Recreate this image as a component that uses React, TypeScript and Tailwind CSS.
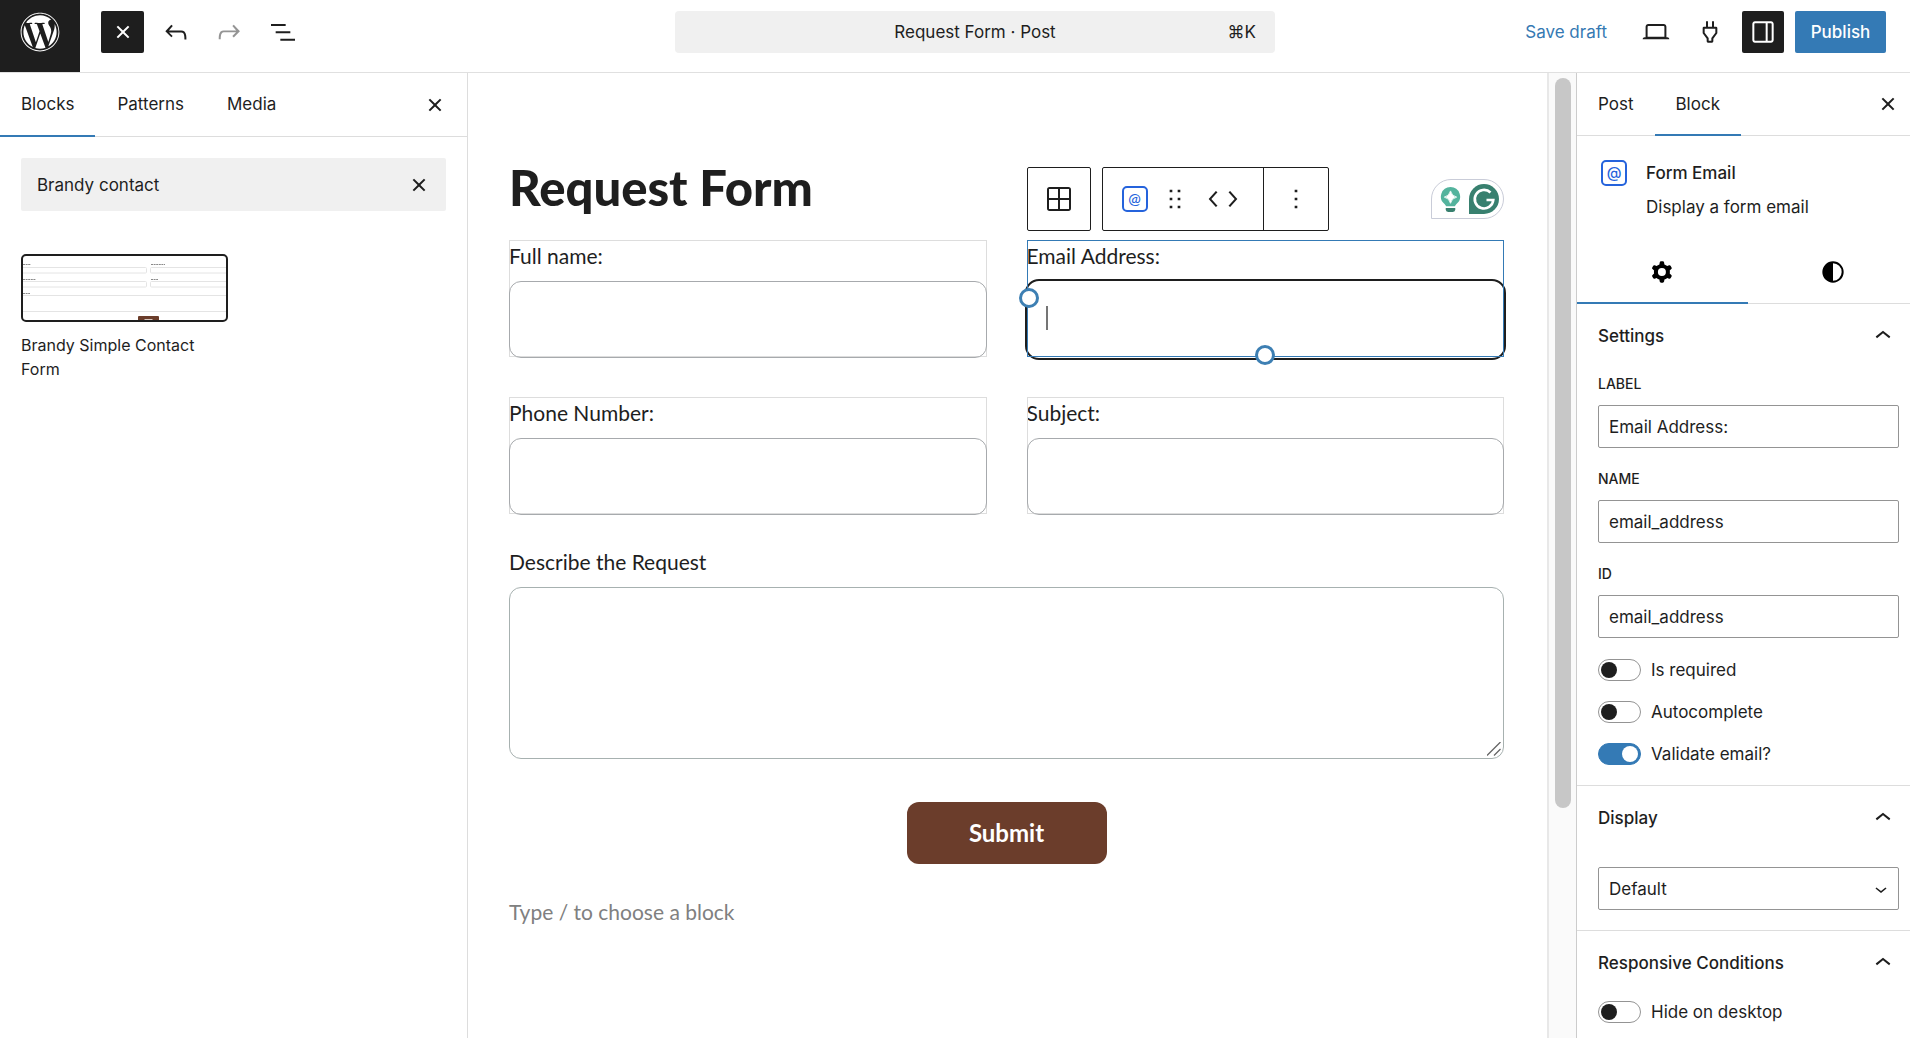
import { useId, useState } from "react";
import type { ReactNode } from "react";
import { FaWordpress } from "react-icons/fa";

const ICONS = {
  close:
    "M12 13.06l3.712 3.713 1.061-1.06L13.061 12l3.712-3.712-1.06-1.06L12 10.938 8.288 7.227l-1.061 1.06L10.939 12l-3.712 3.712 1.06 1.061L12 13.061z",
  undo: "M18.3 11.7c-.6-.6-1.4-.9-2.3-.9H6.7l2.9-3.3-1.1-1-4.5 5L8.5 16l1-1-2.7-2.7H16c.5 0 .9.2 1.3.5 1 1 1 3.4 1 4.5v.3h1.5v-.2c0-1.5 0-4.3-1.5-5.7z",
  redo: "M15.6 6.5l-1.1 1 2.9 3.3H8c-.9 0-1.7.3-2.3.9-1.4 1.5-1.4 4.2-1.4 5.6v.2h1.5v-.3c0-1.1 0-3.5 1-4.5.3-.3.7-.5 1.3-.5h9.2L14.5 15l1.1 1.1 4.6-4.6-4.6-5z",
  listView: "M3 6h11v1.5H3V6Zm3.5 5.5h11V13h-11v-1.5ZM21 17H10v1.5h11V17Z",
  desktop:
    "M20.5 16h-.7V8c0-1.1-.9-2-2-2H6.2c-1.1 0-2 .9-2 2v8h-.7c-.8 0-1.5.7-1.5 1.5h20c0-.8-.7-1.5-1.5-1.5zM5.7 8c0-.3.2-.5.5-.5h11.6c.3 0 .5.2.5.5v7.6H5.7V8z",
  plug: "M10.5 4v4h3V4H15v4h1.5a1 1 0 011 1v4l-3 4v2a1 1 0 01-1 1h-3a1 1 0 01-1-1v-2l-3-4V9a1 1 0 011-1H9V4h1.5zm.5 12.5v2h2v-2l3-4v-3H8v3l3 4z",
  drawer:
    "M18 4H6c-1.1 0-2 .9-2 2v12c0 1.1.9 2 2 2h12c1.1 0 2-.9 2-2V6c0-1.1-.9-2-2-2zm-4 14.5H6c-.3 0-.5-.2-.5-.5V6c0-.3.2-.5.5-.5h8v13zm4.5-.5c0 .3-.2.5-.5.5h-2.5v-13H18c.3 0 .5.2.5.5v12z",
  chevronUp: "M6.5 12.4L12 8l5.5 4.4-.9 1.2L12 10l-4.5 3.6-1-1.2z",
  chevronDown: "M17.5 11.6L12 16l-5.5-4.4.9-1.2L12 14l4.5-3.6 1 1.2z",
  chevronLeft: "M14.6 7l-1.2-1L8 12l5.4 6 1.2-1-4.6-5z",
  chevronRight: "M10.6 6L9.4 7l4.6 5-4.6 5 1.2 1 5.4-6z",
  drag: "M8 7h2V5H8v2zm0 6h2v-2H8v2zm0 6h2v-2H8v2zm6-14v2h2V5h-2zm0 8h2v-2h-2v2zm0 6h2v-2h-2v2z",
  more: "M13 19h-2v-2h2v2zm0-6h-2v-2h2v2zm0-6h-2V5h2v2z",
  grid: "M5 3h14a2 2 0 012 2v14a2 2 0 01-2 2H5a2 2 0 01-2-2V5a2 2 0 012-2zm-.5 1.5v6.75h6.75V4.5zm8.25 0v6.75h6.75V4.5zm-8.25 8.25v6.75h6.75v-6.75zm8.25 0v6.75h6.75v-6.75z",
  styles:
    "M20 12a8 8 0 1 1-16 0 8 8 0 0 1 16 0Zm-1.5 0a6.5 6.5 0 0 1-6.5 6.5v-13a6.5 6.5 0 0 1 6.5 6.5Z",
  cog: "M10.289 4.836A1 1 0 0111.275 4h1.306a1 1 0 01.987.836l.244 1.466c.787.26 1.503.679 2.108 1.218l1.393-.522a1 1 0 011.216.437l.653 1.13a1 1 0 01-.23 1.273l-1.148.944a6.025 6.025 0 010 2.435l1.149.946a1 1 0 01.23 1.272l-.653 1.13a1 1 0 01-1.216.437l-1.394-.522c-.605.54-1.32.958-2.108 1.218l-.244 1.466a1 1 0 01-.987.836h-1.306a1 1 0 01-.986-.836l-.244-1.466a5.995 5.995 0 01-2.108-1.218l-1.394.522a1 1 0 01-1.217-.436l-.653-1.131a1 1 0 01.23-1.272l1.149-.946a6.026 6.026 0 010-2.435l-1.148-.944a1 1 0 01-.23-1.272l.653-1.131a1 1 0 011.217-.437l1.393.522a5.994 5.994 0 012.108-1.218l.244-1.466zM14.929 12a3 3 0 11-6 0 3 3 0 016 0z",
};

function Icon({ name, className = "w-8 h-8" }: { name: keyof typeof ICONS; className?: string }) {
  return (
    <svg viewBox="0 0 24 24" fill="currentColor" fillRule="evenodd" className={`shrink-0 ${className}`} aria-hidden="true">
      <path d={ICONS[name]} />
    </svg>
  );
}

function AtIcon() {
  return (
    <span className="w-[26px] h-[26px] shrink-0 flex items-center justify-center rounded-[5px] border-2 border-[#2563dc] text-[#2563dc] text-[15px] leading-none font-medium pb-0.5">
      @
    </span>
  );
}

/* ── Top bar ── */
function Header() {
  return (
    <header className="h-[73px] shrink-0 flex items-start border-b border-[#e0e0e0]">
      <div className="flex-1 flex items-start mr-16">
        <a href="#dashboard" aria-label="View posts" className="w-20 h-[72px] shrink-0 bg-[#1e1e1e] text-white flex justify-center pt-3">
          <FaWordpress className="w-10 h-10" />
        </a>
        <div className="flex items-center pt-[11px] pl-[21px] gap-[11px]">
          <button aria-label="Close inserter" className="w-[43px] h-[42px] rounded-[2px] bg-[#1e1e1e] text-white flex items-center justify-center">
            <Icon name="close" />
          </button>
          <button aria-label="Undo" className="w-[42px] h-[42px] flex items-center justify-center">
            <Icon name="undo" />
          </button>
          <button aria-label="Redo" className="w-[42px] h-[42px] flex items-center justify-center text-[#949494]">
            <Icon name="redo" />
          </button>
          <button aria-label="Document overview" className="w-[43px] h-[42px] flex items-center justify-center">
            <Icon name="listView" />
          </button>
        </div>
      </div>
      <button className="mt-[11px] w-[600px] h-[42px] rounded-[4px] bg-[#f0f0f0] grid grid-cols-[1fr_auto_1fr] items-center px-[19px] pt-0.5">
        <span className="col-start-2">Request Form · Post</span>
        <span className="text-right">⌘K</span>
      </button>
      <div className="flex-1 flex items-center justify-end pt-[11px] pr-6 gap-[11px]">
        <button className="text-[#3579b3] h-[42px] px-4 pt-0.5">Save draft</button>
        <button aria-label="Preview" className="w-11 h-[42px] flex items-center justify-center">
          <Icon name="desktop" />
        </button>
        <button aria-label="Plugins" className="w-[42px] h-[42px] flex items-center justify-center">
          <Icon name="plug" />
        </button>
        <button aria-label="Settings" className="w-[42px] h-[42px] rounded-[2px] bg-[#1e1e1e] text-white flex items-center justify-center">
          <Icon name="drawer" />
        </button>
        <button className="w-[91px] h-[42px] pt-0.5 rounded-[2px] bg-[#347ab5] text-white font-medium">Publish</button>
      </div>
    </header>
  );
}

function Tab({ label, active = false }: { label: string; active?: boolean }) {
  return (
    <button
      role="tab"
      aria-selected={active}
      className={`-mb-px px-[21px] pt-0.5 border-b-2 ${active ? "border-[#347ab5]" : "border-transparent"}`}
    >
      {label}
    </button>
  );
}

/* ── Inserter ── */
function PatternPreview() {
  return (
    <svg viewBox="0 0 203 64" className="w-full h-16 block" fill="none" stroke="#e4e4e4" aria-hidden="true">
      <path d="M0 11.5h122.500q1 0 1 1v3.500q0 1-1 1H0M203 11.5h-74.500q-1 0-1 1v3.500q0 1 1 1h74.500" />
      <path d="M0 25.500h122.500q1 0 1 1v3.500q0 1-1 1H0M203 25.500h-74.500q-1 0-1 1v3.500q0 1 1 1h74.500" />
      <path d="M0 39.5h203M0 55.500h203" />
      <path d="M0 8.500h8M128 8.500h14M0 23.500h13M128 23.500h7M0 37.500h7" stroke="#8a8a8a" strokeDasharray="2 .6" />
      <rect x="115" y="60" width="21" height="6" rx="1" fill="#6b3d2b" stroke="none" />
      <path d="M121.500 63.500h8" stroke="#d8c8c0" />
    </svg>
  );
}

function Inserter() {
  const [query, setQuery] = useState("Brandy contact");
  return (
    <aside className="w-[468px] shrink-0 border-r border-[#ddd]">
      <div role="tablist" className="h-16 flex gap-px border-b border-[#ddd]">
        <Tab label="Blocks" active />
        <Tab label="Patterns" />
        <Tab label="Media" />
        <button aria-label="Close block inserter" className="ml-auto mr-4">
          <Icon name="close" />
        </button>
      </div>
      <div className="px-[21px] pt-[21px]">
        <div className="h-[53px] flex items-center rounded-[2px] bg-[#f0f0f0] pl-4 pr-[11px]">
          <input
            aria-label="Search"
            value={query}
            onChange={(e) => setQuery(e.target.value)}
            className="flex-1 min-w-0 pt-0.5 bg-transparent outline-none"
          />
          <button aria-label="Reset search" onClick={() => setQuery("")}>
            <Icon name="close" />
          </button>
        </div>
        <button className="mt-[43px] w-[207px] text-left text-base leading-6">
          <span className="block overflow-hidden rounded-[5px] border-2 border-[#1e1e1e] mb-[11px]">
            <PatternPreview />
          </span>
          Brandy Simple Contact Form
        </button>
      </div>
    </aside>
  );
}

/* ── Canvas ── */
function FormField({ label, selected = false, children }: { label: string; selected?: boolean; children?: ReactNode }) {
  const id = useId();
  return (
    <div className={`relative outline-1 -outline-offset-1 ${selected ? "outline-[#347ab5]" : "outline-[#ddd]"}`}>
      <label htmlFor={id} className="block leading-8 mb-[9px]">
        {label}
      </label>
      <input
        id={id}
        className={`block w-full h-[77px] -mb-px rounded-[12px] px-4 ${
          selected ? "outline-2 outline-[#1e1e1e]" : "relative border border-[#a7aaad]"
        }`}
      />
      {children}
    </div>
  );
}

function BlockToolbar() {
  return (
    <div className="absolute left-0 bottom-full mb-[9px] flex items-start gap-[11px]">
      <button aria-label="Select parent block" className="w-16 h-16 flex items-center justify-center rounded-[2px] border border-[#1e1e1e] bg-white">
        <Icon name="grid" />
      </button>
      <div className="h-16 flex rounded-[2px] border border-[#1e1e1e] bg-white">
        <div className="flex items-center pl-[19px] pr-[22px]">
          <button aria-label="Form Email">
            <AtIcon />
          </button>
          <button aria-label="Drag" className="ml-[11px]">
            <Icon name="drag" />
          </button>
          <button aria-label="Move left" className="ml-[14px] w-[18px] flex justify-center">
            <Icon name="chevronLeft" />
          </button>
          <button aria-label="Move right" className="w-[18px] flex justify-center">
            <Icon name="chevronRight" />
          </button>
        </div>
        <button aria-label="Options" className="w-[65px] flex items-center justify-center border-l border-[#1e1e1e]">
          <Icon name="more" />
        </button>
      </div>
    </div>
  );
}

function WritingAssistant() {
  return (
    <div className="absolute right-0 bottom-full mb-[21px] w-[73px] h-10 flex items-center gap-2 pl-2 rounded-full rounded-bl-none border border-[#c9ccd8] bg-white">
      <svg viewBox="0 0 22 28" className="w-[21px] h-[27px]" aria-hidden="true">
        <path d="M11 1a10 10 0 00-6 18l1.500 2h9l1.500-2A10 10 0 0011 1z" fill="#53b39d" />
        <path d="M6 23h10v1.500a2.500 2.500 0 01-2.500 2.500h-5A2.500 2.500 0 016 24.500z" fill="#38806f" />
        <path d="M11 5q1.200 5.300 6.500 6.500Q12.200 12.700 11 18q-1.200-5.300-6.500-6.500Q9.800 10.300 11 5z" fill="#fff" stroke="#fff" strokeWidth=".8" />
      </svg>
      <svg viewBox="0 0 30 30" className="w-[30px] h-[30px]" aria-hidden="true">
        <path d="M15 0a15 15 0 110 30H0V15A15 15 0 0115 0z" fill="#38806f" />
        <path d="M21.500 8.500a9.300 9.300 0 102.800 7.500h-6.800" fill="none" stroke="#fff" strokeWidth="2.600" />
      </svg>
    </div>
  );
}

function Canvas() {
  const id = useId();
  return (
    <main className="flex-1 min-w-0 pl-[41px] pr-[43px] pt-[84px] text-[21px] overflow-hidden" style={{ fontFamily: "Lato, sans-serif" }}>
      <h1 className="text-[49px] leading-[60px] font-black mb-[23px]">Request Form</h1>
      <div className="grid grid-cols-2 gap-10">
        <FormField label="Full name:" />
        <FormField label="Email Address:" selected>
          <BlockToolbar />
          <WritingAssistant />
          <span className="absolute left-[19px] bottom-[27px] w-0.5 h-6 bg-[#757575]" />
          <span className="absolute -left-2 top-12 w-5 h-5 rounded-full border-3 border-[#3d7fb3] bg-white" />
          <span className="absolute left-1/2 -translate-x-1/2 -bottom-2 w-5 h-5 rounded-full border-3 border-[#3d7fb3] bg-white" />
        </FormField>
        <FormField label="Phone Number:" />
        <FormField label="Subject:" />
      </div>
      <div className="relative mt-8">
        <label htmlFor={id} className="block leading-8 mb-[9px]">
          Describe the Request
        </label>
        <textarea id={id} className="block w-full h-[172px] resize-none rounded-[12px] border border-[#a7b1b0] px-4" />
        <svg viewBox="0 0 14 14" className="absolute right-[3px] bottom-[3px] w-3.5 h-3.5" stroke="#666" fill="none" aria-hidden="true">
          <path d="M0 13.500L13.500 0M7 13.500L13.500 7" strokeWidth="1.300" />
        </svg>
      </div>
      <div className="mt-[43px] flex justify-center">
        <button className="w-[200px] h-[62px] rounded-[12px] bg-[#6b3d2b] text-white text-2xl font-bold">Submit</button>
      </div>
      <p className="mt-8 leading-8 text-[#808080]">Type / to choose a block</p>
    </main>
  );
}

function ScrollTrack() {
  return (
    <div className="w-[30px] shrink-0 border-l-2 border-r border-l-[#e8e8e8] border-r-[#ccc] bg-[#fafafa] flex justify-center pt-[5px]">
      <div className="w-4 h-[76%] rounded-full bg-[#c7c7c7]" />
    </div>
  );
}

/* ── Block settings ── */
function Section({ title, children }: { title: string; children: ReactNode }) {
  return (
    <section className="border-t border-[#ddd] first:border-t-0 px-[21px] pb-5">
      <h2>
        <button className="w-full h-16 flex items-center justify-between font-medium" aria-expanded="true">
          <span className="pt-0.5">{title}</span>
          <Icon name="chevronUp" className="w-8 h-8 -mr-[10px]" />
        </button>
      </h2>
      {children}
    </section>
  );
}

function TextControl({ label, value }: { label: string; value: string }) {
  const id = useId();
  return (
    <div className="mb-[21px] -mr-[10px]">
      <label htmlFor={id} className="block text-[14px] leading-5 font-medium uppercase mb-[11px]">
        {label}
      </label>
      <input id={id} defaultValue={value} className="block w-full h-[43px] px-[10px] rounded-[2px] border border-[#949494]" />
    </div>
  );
}

function Toggle({ label, checked = false }: { label: string; checked?: boolean }) {
  const id = useId();
  return (
    <div className="h-[22px] flex items-center gap-[10px]">
      <input
        id={id}
        type="checkbox"
        role="switch"
        defaultChecked={checked}
        className="appearance-none w-[43px] h-[22px] shrink-0 flex items-center px-0.5 rounded-full border border-[#949494] bg-white before:block before:w-4 before:h-4 before:rounded-full before:bg-[#1e1e1e] checked:justify-end checked:bg-[#347ab5] checked:border-[#347ab5] checked:before:bg-white"
      />
      <label htmlFor={id} className="pt-0.5">
        {label}
      </label>
    </div>
  );
}

function BlockSettings() {
  return (
    <aside className="w-[333px] shrink-0 overflow-hidden">
      <div role="tablist" className="h-[63px] flex border-b border-[#ddd]">
        <Tab label="Post" />
        <Tab label="Block" active />
        <button aria-label="Close settings" className="ml-auto mr-[6px]">
          <Icon name="close" />
        </button>
      </div>
      <div className="flex gap-[19px] pl-6 pr-4 pt-6 pb-[21px]">
        <AtIcon />
        <div className="flex flex-col gap-2 leading-[26px]">
          <h2 className="font-medium">Form Email</h2>
          <p>Display a form email</p>
        </div>
      </div>
      <div role="tablist" className="h-[63px] -mr-2 grid grid-cols-2 border-b border-[#ddd] text-black">
        <button role="tab" aria-label="Settings" aria-selected="true" className="-mb-px flex items-center justify-center border-b-2 border-[#347ab5]">
          <Icon name="cog" />
        </button>
        <button role="tab" aria-label="Styles" className="flex items-center justify-center">
          <Icon name="styles" />
        </button>
      </div>
      <div>
        <Section title="Settings">
          <div className="pt-[6px]">
            <TextControl label="Label" value="Email Address:" />
            <TextControl label="Name" value="email_address" />
            <TextControl label="ID" value="email_address" />
          </div>
          <div className="flex flex-col gap-5">
            <Toggle label="Is required" />
            <Toggle label="Autocomplete" />
            <Toggle label="Validate email?" checked />
          </div>
        </Section>
        <Section title="Display">
          <div className="relative mt-[17px] -mr-[10px]">
            <select aria-label="Display" className="block appearance-none w-full h-[43px] px-[10px] pt-0.5 rounded-[2px] border border-[#949494] bg-white">
              <option>Default</option>
            </select>
            <Icon name="chevronDown" className="absolute right-[6px] top-[10px] w-6 h-6 pointer-events-none" />
          </div>
        </Section>
        <Section title="Responsive Conditions">
          <div className="pt-[6px]">
            <Toggle label="Hide on desktop" />
          </div>
        </Section>
      </div>
    </aside>
  );
}

export default function App() {
  return (
    <div className="h-screen flex flex-col overflow-hidden bg-white text-[#1e1e1e] text-[17px]" style={{ fontFamily: "Inter, sans-serif" }}>
      <Header />
      <div className="flex-1 min-h-0 flex">
        <Inserter />
        <Canvas />
        <ScrollTrack />
        <BlockSettings />
      </div>
    </div>
  );
}
